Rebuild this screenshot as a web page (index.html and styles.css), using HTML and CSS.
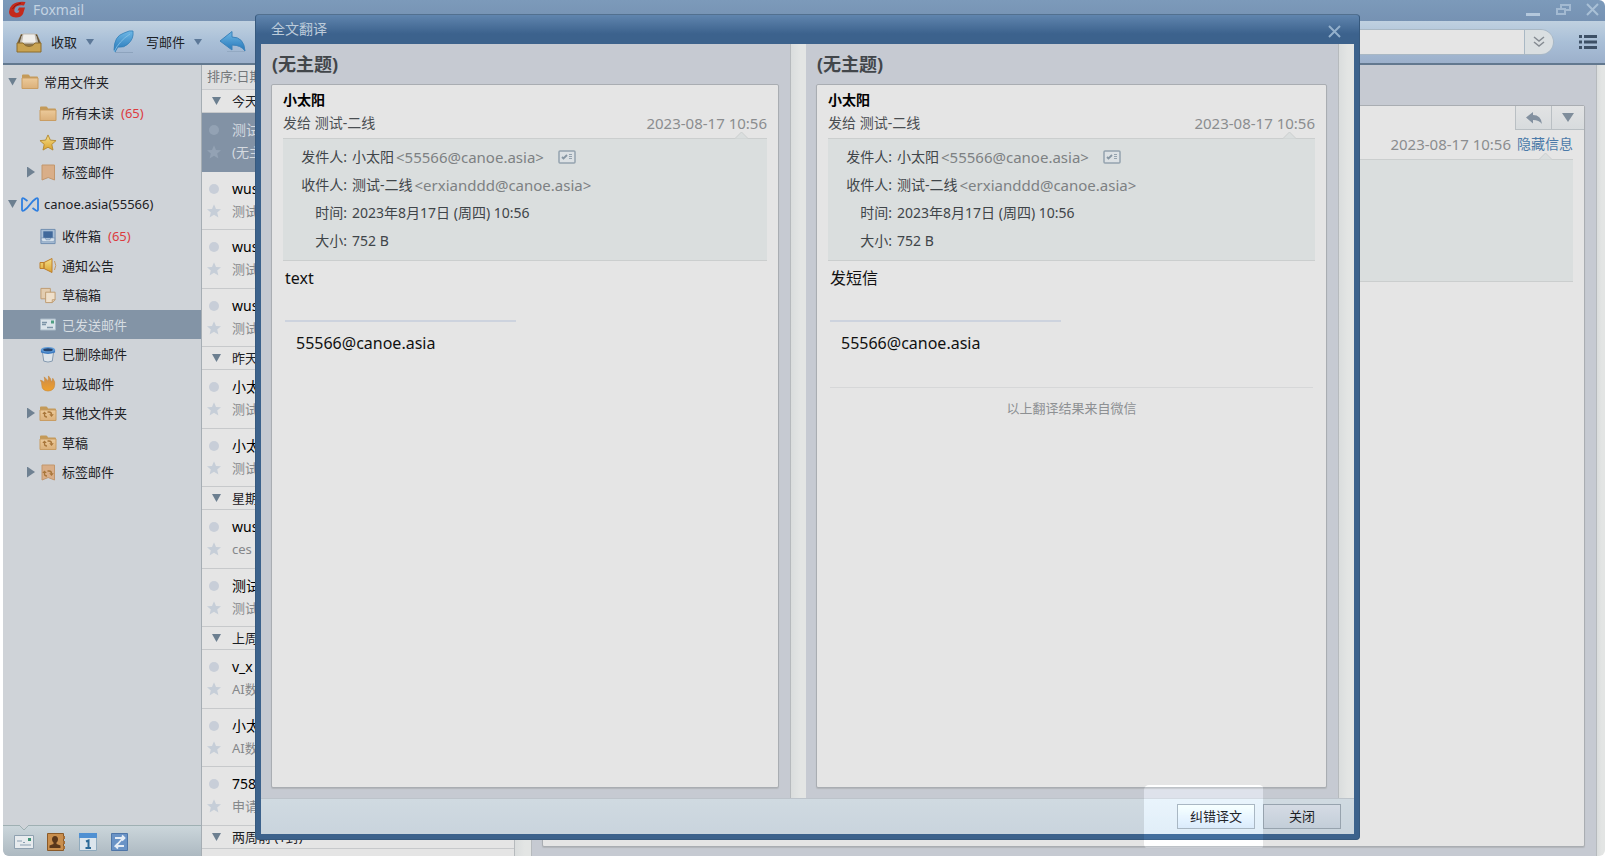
FILE: index.html
```html
<!DOCTYPE html>
<html lang="zh-CN">
<head>
<meta charset="utf-8">
<title>Foxmail</title>
<link rel="stylesheet" href="styles.css">
</head>
<body>
<svg class="defs" aria-hidden="true">
  <defs>
    <linearGradient id="gold" x1="0" y1="0" x2="0" y2="1"><stop offset="0" stop-color="#ecca9a"/><stop offset="1" stop-color="#dbb07a"/></linearGradient>
    <linearGradient id="star" x1="0" y1="0" x2="0" y2="1"><stop offset="0" stop-color="#f6e08a"/><stop offset="1" stop-color="#d9a22e"/></linearGradient>
    <linearGradient id="blue" x1="0" y1="0" x2="0" y2="1"><stop offset="0" stop-color="#6fb8e6"/><stop offset="1" stop-color="#2476b8"/></linearGradient>
    <linearGradient id="flame" x1="0" y1="0" x2="0" y2="1"><stop offset="0" stop-color="#cc8a4a"/><stop offset="1" stop-color="#efa02c"/></linearGradient>
    <symbol id="folder" viewBox="0 0 18 16"><path d="M1 3.500V2q0-1 1-1h5q1 0 1.500 1l.5 1h7q1 0 1 1v10.500H1z" fill="#c49a58"/><path d="M1 4.500h16V15H1z" fill="url(#gold)" stroke="#c99d63"/></symbol>
    <symbol id="sync" viewBox="0 0 18 16"><path d="M5.500 7v2.500q0 2 2.500 2M8.500 6.500h1.500q2.500 0 2.500 2.500" fill="none" stroke="#a8763a" stroke-width="1.300"/><path d="M3.200 8.500h4.600L5.500 6zM10.200 8.800h4.600l-2.300 2.600z" fill="#a8763a"/></symbol>
    <symbol id="tag" viewBox="0 0 18 16"><path d="M3 .500h12.500v15L9.200 13 3 15.500z" fill="#d9ae88" stroke="#c2966c"/></symbol>
    <symbol id="mini-star" viewBox="0 0 14 14"><path d="M7 .300l2 4.600 5 .400-3.800 3.200 1.200 4.900L7 10.800l-4.400 2.600 1.200-4.900L0 5.300l5-.4z"/></symbol>
    <symbol id="card" viewBox="0 0 18 14"><rect x="1" y="1" width="16" height="12" rx="1" fill="#dce1e4" stroke="#94a2ae" stroke-width="1.500"/><path d="M4 7l1.500 1.500L9 5" fill="none" stroke="#8796a3" stroke-width="1.800"/><path d="M11 4.500h3M11 6.500h3M11 8.500h3" stroke="#94a2ae"/></symbol>
  </defs>
</svg>

<div class="app">
  <header class="titlebar">
    <svg class="logo" viewBox="0 0 17 17"><path d="M3 4Q8 0 16.500 1L15 4.500Q8 3.500 6 7q-2 4 1.500 5 2.500 0 3-2.500H8.500L10 6.500h6L14 13q-2 3.500-7 3.500Q0 16 0 11q0-4 3-7z" fill="#c42a1c"/><path d="M12 2Q5 4 3.500 8" fill="none" stroke="#8e1710"/></svg>
    <span class="app-name">Foxmail</span>
    <div class="win-controls">
      <button aria-label="最小化"><svg width="15" height="14"><path d="M0 11.500h14" stroke="#b4c8dc" stroke-width="3"/></svg></button>
      <button aria-label="还原"><svg width="15" height="14"><path d="M5 6V2h9v5h-4M1 6h8v5H1z" fill="none" stroke="#a3bad2" stroke-width="2"/></svg></button>
      <button aria-label="关闭窗口"><svg width="13" height="14"><path d="M1 1l11 11M12 1L1 12" stroke="#a9c0d6" stroke-width="2"/></svg></button>
    </div>
  </header>

  <div class="toolbar">
    <button class="tool"><svg width="26" height="24" viewBox="0 0 26 24"><path d="M5 4h16l4 9v9H1v-9z" fill="#8d7750"/><path d="M5 5h16l3 8H2z" fill="#5e4e36"/><path d="M6 6h14l2 7H4z" fill="#dedad2" stroke="#b8b2a6"/><path d="M7 4h12l1.500 9h-15z" fill="#f0eeea" stroke="#c0bab0"/><path d="M1 13h6q2 3.500 6 3.500t6-3.500h6v9H1z" fill="#c9a352" stroke="#8c6c2d"/></svg><span>收取</span><i class="down small"></i></button>
    <button class="tool"><svg width="26" height="24" viewBox="0 0 26 24"><path d="M4 22.500h18" stroke="#8da3bd"/><path d="M3 20Q3 6 13 3q6-3 9-2 1 8-5 13-4 4-10 3l-3 5z" fill="url(#blue)" stroke="#3580b8" stroke-width=".8"/><path d="M3 22Q8 11 19 4" fill="none" stroke="#8cc4e6" stroke-width=".8"/></svg><span>写邮件</span><i class="down small"></i></button>
    <button class="tool"><svg width="28" height="24" viewBox="0 0 28 24"><path d="M8 21.500h18" stroke="#93a9c2"/><path d="M1 11L13 1.500V7q12 0 13 14-4-6-13-6v5z" fill="url(#blue)" stroke="#3c83ba"/></svg><span>回复</span></button>
    <div class="search">
      <input type="text" aria-label="搜索">
      <button aria-label="展开搜索"><svg width="12" height="12"><path d="M1 1l5 4 5-4M1 6l5 4 5-4" fill="none" stroke="#858b92" stroke-width="1.500"/></svg></button>
    </div>
    <button class="menu" aria-label="菜单"><svg width="18" height="16"><path d="M0 2.500h3M0 8h3M0 13.500h3M5 2.500h13M5 8h13M5 13.500h13" stroke="#3d5066" stroke-width="3"/></svg></button>
  </div>

  <div class="body">
    <nav class="sidebar">
      <div class="tree">
        <div class="root"><i class="down"></i><svg class="ico"><use href="#folder"/></svg><span>常用文件夹</span></div>
        <ul>
          <li><i class="gap"></i><svg class="ico"><use href="#folder"/></svg><span>所有未读</span><b>(65)</b></li>
          <li><i class="gap"></i><svg class="ico" viewBox="0 0 18 18"><path d="M9 1l2.500 5.500 6 .500-4.500 4 1.300 6L9 14l-5.300 3L5 11 .500 7l6-.5z" fill="url(#star)" stroke="#b58a32"/></svg><span>置顶邮件</span></li>
          <li><i class="right"></i><svg class="ico"><use href="#tag"/></svg><span>标签邮件</span></li>
        </ul>
        <div class="root account"><i class="down"></i><svg class="ico" viewBox="0 0 18 16"><path d="M6.500 4.500L3 2Q1 1 1 3v10q0 2 2 1l3-2.500L12 4.500 15 2q2-1 2 1v10q0 2-2 1l-3.500-2.500" fill="none" stroke="#2f7fe0" stroke-width="1.800"/></svg><span>canoe.asia(55566)</span></div>
        <ul class="mailboxes">
          <li><i class="gap"></i><svg class="ico" viewBox="0 0 18 18"><path d="M1.500 1.500h15v15h-15z" fill="#a9bfd6" stroke="#6d8bae"/><path d="M4 3.500h10v7H4z" fill="#41699b"/><path d="M2 10.500h4l1 2h4l1-2h4v2l-1 2H3l-1-2z" fill="#d5e1ec" stroke="#6d8bae" stroke-width=".6"/></svg><span>收件箱</span><b>(65)</b></li>
          <li><i class="gap"></i><svg class="ico" viewBox="0 0 18 16"><path d="M1 5h4v6H1zM5 5l8-4v14l-8-4z" fill="url(#star)" stroke="#bd7e2d"/><path d="M15.500 3.500q2.500 4.500 0 9" fill="none" stroke="#c79a60"/></svg><span>通知公告</span></li>
          <li><i class="gap"></i><svg class="ico" viewBox="0 0 18 18"><path d="M1.500 1.500h10v11h-10z" fill="#e3cdb0" stroke="#bd9a6e"/><path d="M6.500 5.500h10v8l-3 3h-7z" fill="#efe0cb" stroke="#bd9a6e"/><path d="M13.500 16.500v-3h3" fill="none" stroke="#bd9a6e"/></svg><span>草稿箱</span></li>
          <li class="selected"><i class="gap"></i><svg class="ico" viewBox="0 0 18 16"><path d="M1.500 2.500h15v11h-15z" fill="#dbe4ea" stroke="#a9bac8"/><path d="M3 6h5M3 8h4M8 11h6" stroke="#7e95a8" stroke-width="1.300"/><path d="M12 4h3v3h-3z" fill="#4f9e82"/></svg><span>已发送邮件</span></li>
          <li><i class="gap"></i><svg class="ico" viewBox="0 0 18 18"><path d="M3 6h12l-1.500 10q-4.500 2-9 0z" fill="#dde4ea" stroke="#8297ad"/><path d="M1.500 4v3q7.500 3 15 0V4z" fill="#3c7ac0"/><ellipse cx="9" cy="4" rx="7.500" ry="3" fill="#5f9bd8"/><ellipse cx="9" cy="4" rx="5" ry="1.600" fill="#27446d"/></svg><span>已删除邮件</span></li>
          <li><i class="gap"></i><svg class="ico" viewBox="0 0 18 18"><path d="M9 17q-6.500-.5-6.500-6Q2.500 8 1 5.500q3 .5 4 2.500Q6 5 5 2q2.500 2 3.500 4.500Q10 4 9.500 1q3 3 3 6.500Q14 6 14 3.500q3 4 2 7.500-.5 5.500-7 6z" fill="url(#flame)" stroke="#c98b40" stroke-width=".7"/></svg><span>垃圾邮件</span></li>
          <li><i class="right"></i><svg class="ico"><use href="#folder"/><use href="#sync"/></svg><span>其他文件夹</span></li>
          <li><i class="gap"></i><svg class="ico"><use href="#folder"/><use href="#sync"/></svg><span>草稿</span></li>
          <li><i class="right"></i><svg class="ico"><use href="#tag"/><use href="#sync"/></svg><span>标签邮件</span></li>
        </ul>
      </div>
      <div class="dock">
        <svg class="notch" viewBox="0 0 10 6"><path d="M0 0l5 5 5-5" fill="#cfd3d8" stroke="#9fb0b3"/></svg>
        <button aria-label="邮件"><svg width="20" height="18"><path d="M.500 2.500h19v13H.500z" fill="#e7ebee" stroke="#8fa1b0"/><path d="M3 8h5M6 12h11M9 9.500h2" stroke="#8ba0b2"/><path d="M14 5h3v3h-3z" fill="#3f9276"/></svg></button>
        <button aria-label="通讯录"><svg width="20" height="18"><path d="M1.500 .500h16v17h-16z" fill="#c98f4e" stroke="#8b5a28"/><path d="M17 3h2v3h-2zM17 8h2v3h-2zM17 13h2v3h-2z" fill="#a56f38"/><path d="M9 3q3 0 3 3.500 0 2-1.500 3v1.500l4 1.500V15h-11v-2.500l4-1.500V9.500Q6 8.500 6 6.500 6 3 9 3z" fill="#5a371b"/></svg></button>
        <button aria-label="日历"><svg width="20" height="18"><path d="M1.500 .500h17v17h-17z" fill="#dbe5ec" stroke="#8faabd"/><path d="M1 0h18v5H1z" fill="#4f90d2"/><path d="M8 8.500l2.500-1V15M7.500 15h5.500" fill="none" stroke="#2c6a98" stroke-width="2"/></svg></button>
        <button aria-label="便笺"><svg width="20" height="18"><path d="M1.500 .500h16v17h-16z" fill="#6a93c6" stroke="#4f76a8"/><path d="M5 5h8L6 13h8M12 2.500L14.500 5 12 7.500M8 10.500L5.500 13 8 15.500" fill="none" stroke="#e6edf5" stroke-width="1.800"/></svg></button>
      </div>
    </nav>

    <section class="maillist">
      <div class="sort">排序:日期</div>
      <div class="group">
        <h3><i class="down"></i>今天</h3>
        <div class="item selected"><i class="dot"></i><strong>测试</strong><svg class="mark"><use href="#mini-star"/></svg><span>(无主题)</span></div>
        <div class="item"><i class="dot"></i><strong>wus</strong><svg class="mark"><use href="#mini-star"/></svg><span>测试</span></div>
        <div class="item"><i class="dot"></i><strong>wus</strong><svg class="mark"><use href="#mini-star"/></svg><span>测试</span></div>
        <div class="item"><i class="dot"></i><strong>wus</strong><svg class="mark"><use href="#mini-star"/></svg><span>测试</span></div>
      </div>
      <div class="group">
        <h3><i class="down"></i>昨天</h3>
        <div class="item"><i class="dot"></i><strong>小太阳</strong><svg class="mark"><use href="#mini-star"/></svg><span>测试</span></div>
        <div class="item"><i class="dot"></i><strong>小太阳</strong><svg class="mark"><use href="#mini-star"/></svg><span>测试</span></div>
      </div>
      <div class="group">
        <h3><i class="down"></i>星期</h3>
        <div class="item"><i class="dot"></i><strong>wus</strong><svg class="mark"><use href="#mini-star"/></svg><span>ces</span></div>
        <div class="item"><i class="dot"></i><strong>测试</strong><svg class="mark"><use href="#mini-star"/></svg><span>测试</span></div>
      </div>
      <div class="group">
        <h3><i class="down"></i>上周</h3>
        <div class="item"><i class="dot"></i><strong>v_x</strong><svg class="mark"><use href="#mini-star"/></svg><span>AI数</span></div>
        <div class="item"><i class="dot"></i><strong>小太阳</strong><svg class="mark"><use href="#mini-star"/></svg><span>AI数</span></div>
        <div class="item"><i class="dot"></i><strong>758</strong><svg class="mark"><use href="#mini-star"/></svg><span>申请</span></div>
      </div>
      <div class="group">
        <h3><i class="down"></i>两周前 (1封)</h3>
      </div>
    </section>
    <div class="track list-track"></div>

    <main class="reader">
      <article class="sheet">
        <div class="quick">
          <button aria-label="回复"><svg width="16" height="12"><path d="M0 5.500L7 0v3q8 0 9 9-3-4-9-4v3.500z" fill="#8391a0"/></svg></button>
          <button aria-label="更多"><i class="down"></i></button>
        </div>
        <p class="when"><time>2023-08-17 10:56</time> <a href="#">隐藏信息</a></p>
        <div class="info blank"><svg class="peak far" viewBox="0 0 13 8"><path d="M0 7.500L6.500 1 13 7.500z" fill="#dadede"/><path d="M0 7.500L6.500 1 13 7.500" fill="none" stroke="#cbcece"/></svg></div>
      </article>
    </main>
    <div class="track reader-track"></div>
  </div>
</div>

<div class="dialog" role="dialog" aria-labelledby="dlg-title">
  <div class="dlg-head"><h1 id="dlg-title">全文翻译</h1><button aria-label="关闭对话框"><svg width="13" height="13"><path d="M1 1l11 11M12 1L1 12" stroke="#94b0cb" stroke-width="2"/></svg></button></div>
  <div class="panes">
    <section class="pane">
      <div class="pane-in">
        <h2>(无主题)</h2>
        <article class="sheet letter">
          <p class="from">小太阳</p>
          <p class="to"><span>发给 测试-二线</span><time>2023-08-17 10:56</time></p>
          <div class="info">
            <dl>
              <dt>发件人:</dt><dd>小太阳<em>&lt;55566@canoe.asia&gt;</em><svg class="vcard"><use href="#card"/></svg></dd>
              <dt>收件人:</dt><dd>测试-二线<em>&lt;erxianddd@canoe.asia&gt;</em></dd>
              <dt>时间:</dt><dd>2023年8月17日 (周四) 10:56</dd>
              <dt>大小:</dt><dd>752 B</dd>
            </dl>
            <svg class="peak" viewBox="0 0 13 8"><path d="M0 7.500L6.500 1 13 7.500z" fill="#dadede"/><path d="M0 7.500L6.500 1 13 7.500" fill="none" stroke="#cbcece"/></svg>
          </div>
          <div class="content">
            <p>text</p>
            <hr>
            <p class="sign">55566@canoe.asia</p>
          </div>
        </article>
      </div>
      <div class="track"></div>
    </section>
    <section class="pane">
      <div class="pane-in">
        <h2>(无主题)</h2>
        <article class="sheet letter">
          <p class="from">小太阳</p>
          <p class="to"><span>发给 测试-二线</span><time>2023-08-17 10:56</time></p>
          <div class="info">
            <dl>
              <dt>发件人:</dt><dd>小太阳<em>&lt;55566@canoe.asia&gt;</em><svg class="vcard"><use href="#card"/></svg></dd>
              <dt>收件人:</dt><dd>测试-二线<em>&lt;erxianddd@canoe.asia&gt;</em></dd>
              <dt>时间:</dt><dd>2023年8月17日 (周四) 10:56</dd>
              <dt>大小:</dt><dd>752 B</dd>
            </dl>
            <svg class="peak" viewBox="0 0 13 8"><path d="M0 7.500L6.500 1 13 7.500z" fill="#dadede"/><path d="M0 7.500L6.500 1 13 7.500" fill="none" stroke="#cbcece"/></svg>
          </div>
          <div class="content">
            <p>发短信</p>
            <hr>
            <p class="sign">55566@canoe.asia</p>
            <p class="credit">以上翻译结果来自微信</p>
          </div>
        </article>
      </div>
      <div class="track"></div>
    </section>
  </div>
  <footer class="dlg-foot">
    <button>纠错译文</button>
    <button>关闭</button>
    <div class="spotlight"></div>
  </footer>
</div>
</body>
</html>
```
FILE: styles.css
```css
* { box-sizing: border-box; margin: 0; padding: 0; }
body {
  font: 13px/20px "Noto Sans", "Noto Sans CJK SC", sans-serif;
  color: #1c2024;
  background: #fff;
}
button { font: inherit; color: inherit; background: none; border: 0; display: flex; align-items: center; justify-content: center; }
svg { display: block; flex: none; }
ul { list-style: none; }
.defs { position: absolute; width: 0; height: 0; }

.down, .right, .gap { flex: none; width: 9px; height: 8px; }
.down { background: #6c7f90; clip-path: polygon(0 0, 100% 0, 50% 100%); }
.down.small { width: 8px; height: 6px; background: #5c7898; }
.right { width: 8px; height: 11px; background: #6f8192; clip-path: polygon(0 0, 100% 50%, 0 100%); }
.gap { width: 8px; }

.app {
  height: 100vh;
  margin: 0 1px 0 3px;
  display: flex;
  flex-direction: column;
  border-radius: 0 6px 6px 6px;
  overflow: hidden;
}
.titlebar { flex: none; height: 21px; display: flex; align-items: center; gap: 7px; padding: 0 6px 2px; background: linear-gradient(#7c9aba, #7692b3); }
.logo { width: 17px; height: 17px; }
.app-name { font-size: 14px; line-height: 18px; color: #c3d3e2; }
.win-controls { margin-left: auto; display: flex; gap: 15px; }

.toolbar { flex: none; height: 44px; display: flex; align-items: center; padding: 0 8px 0 13px; background: linear-gradient(#c0d1e0, #a9bfd7 50%, #9cb0cb); border-bottom: 2px solid #62788f; }
.tool { margin-right: 17px; white-space: nowrap; gap: 9px; }
.search { flex: 1; margin-right: 25px; height: 26px; display: flex; border: 1px solid #a9b8c4; border-radius: 13px; overflow: hidden; }
.search input { flex: 1; min-width: 0; border: 0; background: #e5e5e5; font: inherit; padding: 0 8px; }
.search button { width: 29px; border-left: 1px solid #a9b8c4; background: #dadfe1; }

.body { flex: 1; min-height: 0; display: flex; }
.sidebar { flex: none; width: 199px; display: flex; flex-direction: column; background: #cfd3d8; border-right: 1px solid #a5adb3; }
.tree { flex: 1; padding-top: 2px; }
.root, .tree li { display: flex; align-items: center; }
.root { height: 31px; padding: 0 0 2px 5px; }
.root.account { height: 34px; padding-bottom: 0; }
.root .ico { margin: 0 5px 0 4px; }
.tree li { height: 29px; padding-left: 24px; }
.tree li:nth-child(odd) { height: 30px; }
.tree li .ico { margin: 0 5px 0 4px; }
.ico { width: 18px; height: 17px; }
.tree b { margin-left: 7px; font-weight: 400; color: #dc3b3f; }
.tree .selected { background: #8394a6; color: #d7dde2; }
.dock { position: relative; flex: none; height: 31px; display: flex; align-items: center; gap: 12px; padding: 2px 0 0 11px; background: linear-gradient(#cbd6db, #adb9c1); border-top: 1px solid #9fb0b3; border-radius: 0 0 0 5px; }
.notch { position: absolute; left: 16px; top: -1px; width: 10px; height: 6px; }

.maillist { flex: none; width: 312px; background: #e5e5e5; overflow: hidden; }
.sort { height: 25px; line-height: 23px; padding-left: 5px; color: #73777a; background: #dedfe0; border-bottom: 1px solid #c9cbce; }
.group h3 { height: 23px; display: flex; align-items: center; gap: 11px; padding-left: 10px; font-size: 13px; font-weight: 400; border-bottom: 1px solid #c7c9cb; }
.item { height: 58px; display: grid; grid-template-columns: 14px 1fr; grid-template-rows: 23px 21px; column-gap: 11px; align-items: center; padding: 5px 0 0 5px; border-bottom: 1px solid #c7c9cb; }
.item:nth-child(even) { height: 59px; }
.dot { width: 10px; height: 10px; margin-left: 2px; border-radius: 50%; background: #c8ced8; }
.mark { width: 14px; height: 14px; fill: #c6ced8; }
.item strong { font-size: 14px; font-weight: 400; color: #000; }
.item span { color: #85888b; }
.item.selected { background: #8292a5; border-color: #8292a5; }
.item.selected strong, .item.selected span { color: #d5dae0; }
.item.selected .dot { background: #93a2b4; }
.item.selected .mark { fill: #93a2b4; }

.track { flex: none; width: 16px; background: linear-gradient(90deg, #dadddd, #e3e5e4 60%); border-left: 1px solid #b6babd; }
.list-track { width: 17px; }
.reader-track { width: 9px; }
.reader { flex: 1; min-width: 0; display: flex; flex-direction: column; background: #c6cad2; border-left: 1px solid #b6babd; padding: 40px 11px 9px 10px; }
.sheet { flex: 1; background: #e5e5e5; border: 1px solid #a9adb2; border-radius: 2px; box-shadow: 0 1px 1px #b2b5ba; }
.quick { display: flex; justify-content: flex-end; height: 24px; }
.quick button { width: 36px; background: linear-gradient(#e2e3e4, #d7dbdd); border: 1px solid #b9bfc3; border-top: 0; border-right: 0; }
.quick button + button { width: 33px; }
.quick .down { width: 12px; height: 9px; background: #7f8d9b; }
.when { display: flex; justify-content: flex-end; gap: 6px; padding: 4px 11px 5px; font-size: 14px; }
time { font-size: 15px; color: #8b8d8f; }
a { color: #4c7aa9; text-decoration: none; }
.info { position: relative; background: #dadede; border: solid #cbcece; border-width: 1px 0; color: #3f4549; }
.blank { height: 123px; margin: 0 11px; }
.peak { position: absolute; right: 19px; top: -8px; width: 13px; height: 8px; }
.peak.far { right: 21px; }

.dialog { position: fixed; top: 14px; left: 255px; right: 246px; bottom: 16px; display: flex; flex-direction: column; background: #3c628c; border: 1px solid #37597d; border-top-color: #52708f; border-radius: 4px; padding: 0 5px 5px; }
.dlg-head { flex: none; height: 29px; margin: 0 -5px; padding: 0 18px 0 15px; display: flex; align-items: center; justify-content: space-between; border-radius: 3px 3px 0 0; background: linear-gradient(#6085ae, #3c628d 65%, #3c628c); }
.dlg-head h1 { font-size: 14px; line-height: 20px; padding-bottom: 2px; font-weight: 400; color: #bccbda; }
.dlg-head button { padding-top: 3px; }
.panes { flex: 1; min-height: 0; display: grid; grid-template-columns: 545fr 548fr; }
.pane { display: flex; min-width: 0; }
.pane-in { flex: 1; min-width: 0; display: flex; flex-direction: column; background: #c6cad2; padding: 0 11px 10px 10px; }
.pane h2 { height: 40px; line-height: 40px; padding-left: 1px; font-size: 18px; font-weight: 700; color: #42464a; }
.letter { padding: 4px 11px; }
.from { font-size: 14px; line-height: 22px; font-weight: 700; color: #000; }
.to { display: flex; justify-content: space-between; font-size: 14px; line-height: 24px; padding-bottom: 3px; color: #4a4e52; }
dl { display: grid; grid-template-columns: 64px 1fr; column-gap: 5px; grid-auto-rows: 28px; align-items: center; padding: 4px 0 5px; font-size: 14px; }
dt { text-align: right; }
dd { display: flex; align-items: center; }
em { margin-left: 2px; font-style: normal; font-size: 15px; color: #7d8183; }
.vcard { width: 18px; height: 14px; margin-left: 14px; }
.content { padding: 5px 2px; font-size: 16px; line-height: 24px; color: #111; }
.content hr { width: 231px; margin: 30px 0 9px; border: 0; height: 2px; background: #cdd3de; }
.content .sign { padding-left: 11px; }
.content .credit { margin-top: 32px; padding-top: 10px; border-top: 1px solid #d6d7d8; text-align: center; font-size: 13px; line-height: 20px; color: #8d9093; }

.dlg-foot { position: relative; flex: none; height: 36px; display: flex; align-items: center; justify-content: flex-end; gap: 8px; padding: 0 13px; background: linear-gradient(#d0dae1, #c9d4dd); border-top: 1px solid #bcc3ca; }
.dlg-foot button { width: 78px; height: 25px; padding-bottom: 2px; border: 1px solid #97a3ae; background: linear-gradient(#d5dbe4, #c3ced9); }
.dlg-foot button:first-child { background: linear-gradient(#dde5ed, #c3d2e0); }
.spotlight { position: absolute; right: 90px; top: -14px; width: 120px; height: 64px; border-radius: 5px; backdrop-filter: brightness(1.12); }
```
